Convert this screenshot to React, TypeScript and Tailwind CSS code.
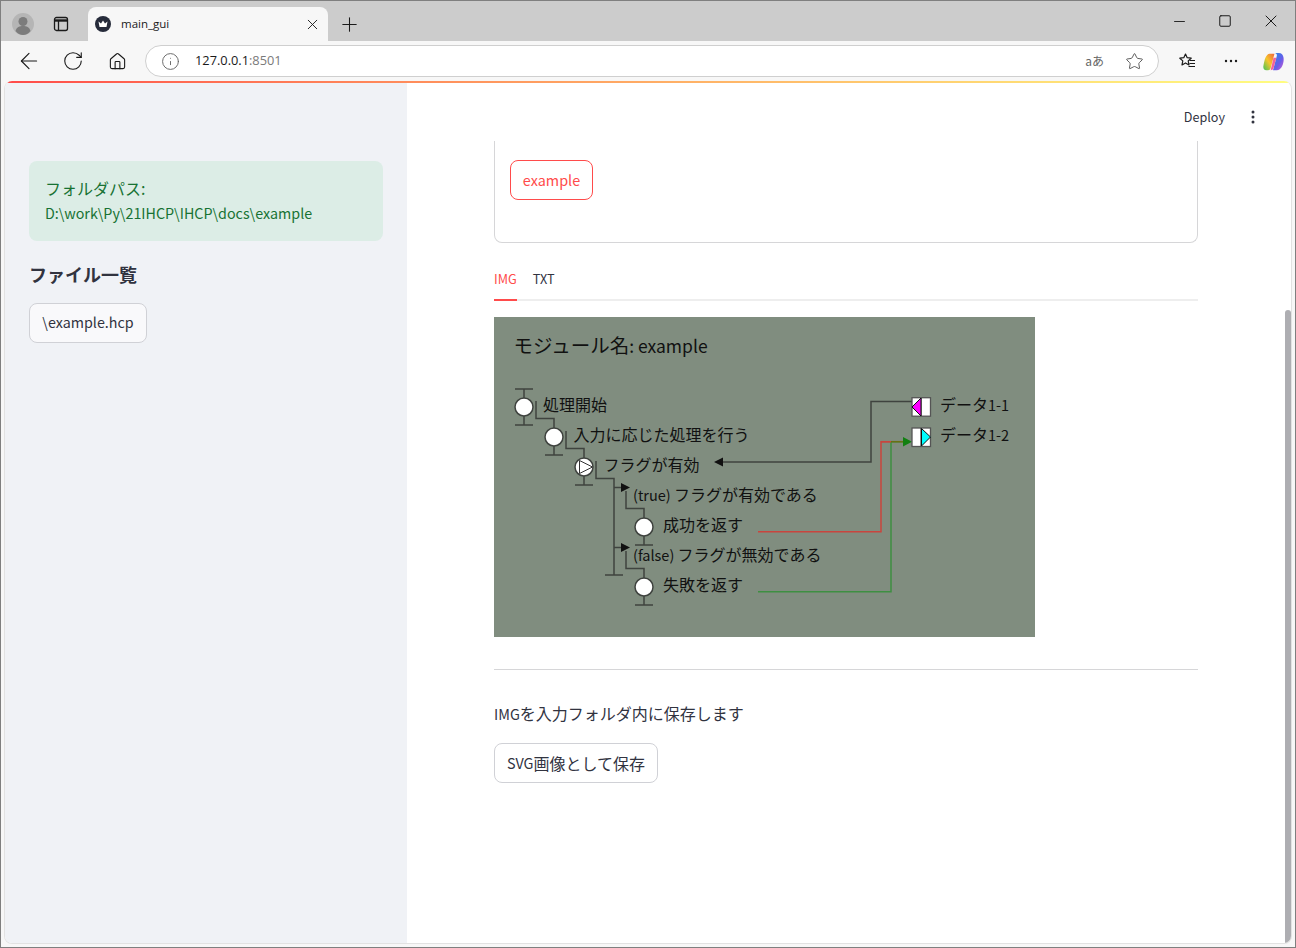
import { ArrowLeft, Home, Info, Minus, Plus, RotateCw, Square, Star, X } from "lucide-react";

const uiFont = { fontFamily: '"Noto Sans CJK JP", "Noto Sans", sans-serif' };

function ProfileIcon() {
    return (
        <svg width="22" height="22" viewBox="0 0 22 22">
            <circle cx="11" cy="11" r="11" fill="#b5b5b5" />
            <circle cx="11" cy="8.5" r="4.5" fill="#7c7c7c" />
            <path d="M3.5 18c1-4 4-5 7.5-5s6.500 1 7.500 5c-2 2.500-4.500 4-7.500 4s-5.500-1.500-7.500-4z" fill="#7c7c7c" />
        </svg>
    );
}

function TabsIcon() {
    return (
        <svg width="16" height="16" viewBox="0 0 16 16" fill="none" stroke="#1a1a1a" strokeWidth="1.3">
            <rect x="1.500" y="1.500" width="13" height="13" rx="2" />
            <path d="M2 4.500h12" strokeWidth="2.400" />
            <path d="M5.500 5v9" />
        </svg>
    );
}

function CrownFavicon() {
    return (
        <svg width="16" height="16" viewBox="0 0 16 16">
            <circle cx="8" cy="8" r="8" fill="#262b3a" />
            <path d="M3.500 5.500l2.500 2 2-3 2 3 2.500-2-1 5.500h-7z" fill="#ffffff" />
        </svg>
    );
}

function FavoritesIcon() {
    return (
        <svg width="18" height="18" viewBox="0 0 18 18" fill="none" stroke="#1a1a1a" strokeWidth="1.2">
            <path d="M7.500 2l1.700 3.700 4 .5-3 2.700.8 4-3.500-2-3.500 2 .8-4-3-2.700 4-.5z" strokeLinejoin="round" />
            <path d="M11.500 8.500h5.500M11.500 11.500h5.500M10.500 14.500h6.500" />
        </svg>
    );
}

function CopilotIcon() {
    return (
        <svg width="23" height="23" viewBox="0 0 24 24">
            <defs>
                <linearGradient id="copilotA" x1="0" y1="1" x2="1" y2="0">
                    <stop offset="0" stopColor="#3fc45a" />
                    <stop offset="0.5" stopColor="#f7c52c" />
                    <stop offset="1" stopColor="#f0663a" />
                </linearGradient>
                <linearGradient id="copilotB" x1="0" y1="0" x2="1" y2="1">
                    <stop offset="0" stopColor="#1f8fe8" />
                    <stop offset="0.6" stopColor="#6a5ce8" />
                    <stop offset="1" stopColor="#d45fd0" />
                </linearGradient>
            </defs>
            <path d="M8 4h5l-4 15c-.4 1.400-1.400 2-2.500 2H4.500C2 21 1 19 1.500 16.500 2.500 11 4 4 8 4z" fill="url(#copilotA)" />
            <path d="M13 3h4.500C20.500 3 22 5 22.500 8c.6 4-1 10-4 12-1 .7-2 1-3 1h-4l4-15c.3-1.500-.5-3-2.500-3z" fill="url(#copilotB)" />
            <path d="M9 21l3-13h3l-3 11c-.4 1.300-1.500 2-3 2z" fill="#f2639b" />
        </svg>
    );
}

function Node({ cx, cy, top = false }: { cx: number; cy: number; top?: boolean }) {
    return (
        <g>
            {top && <path d={`M${cx - 9} ${cy - 18}h18M${cx} ${cy - 18}v9`} />}
            <path d={`M${cx} ${cy + 9}v9M${cx - 9} ${cy + 18}h18`} />
            <circle cx={cx} cy={cy} r="9" fill="#ffffff" />
        </g>
    );
}

function FlowDiagram() {
    const lineColor = "#3f433f";
    return (
        <svg width="541" height="320" viewBox="494 317 541 320" className="block bg-[#808d7f]" style={uiFont}>
            <g fill="none" stroke={lineColor} strokeWidth="1.500">
                <path d="M536 401v17.500h18V428" />
                <path d="M566 431v17.500h18V458" />
                <path d="M596 461v17.500h18V575M605 575h18" />
                <path d="M614 487.500h8M614 547.500h8" />
                <path d="M626 491v17.500h18V518" />
                <path d="M626 551v17.500h18V578" />
                <Node cx={524} cy={407} top />
                <Node cx={554} cy={437} />
                <Node cx={584} cy={467} />
                <Node cx={644} cy={527} />
                <Node cx={644} cy={587} />
                <path d="M579.500 460.500l13 6.500-13 6.500z" strokeWidth="1" fill="none" stroke="#333" />
                <path d="M912 401.500h-41v60.500H722" />
            </g>
            <g fill="#111111">
                <path d="M621 483l9 4.500-9 4.500z" />
                <path d="M621 543l9 4.500-9 4.500z" />
                <path d="M714 462l9-4.500v9z" />
            </g>
            <path d="M758 531.700h123V441.700h10" fill="none" stroke="#c9453e" strokeWidth="1.500" />
            <path d="M758 591.700h133V441.700h13" fill="none" stroke="#3e8f42" strokeWidth="1.500" />
            <path d="M881 441.700h10" fill="none" stroke="#c9453e" strokeWidth="1.500" />
            <path d="M891 441.700h13" fill="none" stroke="#6a7012" strokeWidth="1.500" />
            <path d="M903 437l9 4.700-9 4.700z" fill="#118011" />
            <g stroke="#555555" strokeWidth="1.300">
                <rect x="912" y="397.700" width="18.500" height="18.500" fill="#ffffff" />
                <rect x="912" y="428" width="18.500" height="18.500" fill="#ffffff" />
            </g>
            <path d="M921 398v18M921 428v18" stroke="#222" strokeWidth="1" />
            <path d="M921 398l-9 9 9 9z" fill="#ff00ff" stroke="#111" strokeWidth="1" />
            <path d="M921.500 428.500l9 8.500-9 9z" fill="#00ffff" stroke="#111" strokeWidth="1" />
            <g fill="#111111" fontSize="16">
                <text x="513.500" y="352.500" fontSize="19.500">モジュール名<tspan fontSize="17.500">: example</tspan></text>
                <text x="543" y="411">処理開始</text>
                <text x="573.500" y="441">入力に応じた処理を行う</text>
                <text x="603.500" y="471">フラグが有効</text>
                <text x="633" y="501"><tspan fontSize="14.500">(true) </tspan>フラグが有効である</text>
                <text x="663" y="531">成功を返す</text>
                <text x="633" y="561"><tspan fontSize="14.500">(false) </tspan>フラグが無効である</text>
                <text x="663" y="591">失敗を返す</text>
                <text x="940" y="411">データ<tspan fontSize="14.500">1-1</tspan></text>
                <text x="940" y="441">データ<tspan fontSize="14.500">1-2</tspan></text>
            </g>
        </svg>
    );
}

export default function App() {
    return (
        <div className="w-[1296px] h-[948px] overflow-hidden flex flex-col bg-[#f7f7f7] border-x border-b border-[#7f7f7f]" style={uiFont}>
            {/* Title bar */}
            <div className="h-[41px] shrink-0 bg-[#cccccc] border-t border-[#7f7f7f] flex items-end text-[#1a1a1a]">
                <div className="w-[43px] h-[34px] pl-[11px] flex items-center">
                    <ProfileIcon />
                </div>
                <div className="w-[35px] h-[34px] pl-[9px] flex items-center">
                    <TabsIcon />
                </div>
                <div className="ml-[9px] w-[240px] h-[34px] bg-[#f7f7f7] rounded-t-lg flex items-center pl-[7px] pr-[7px]">
                    <CrownFavicon />
                    <span className="ml-[10px] flex-1 text-[11.500px] text-[#1a1a1a]" style={{ fontFamily: '"Open Sans", sans-serif' }}>main_gui</span>
                    <X size={17} strokeWidth={1.300} />
                </div>
                <div className="ml-[10px] h-[34px] flex items-center">
                    <Plus size={23} strokeWidth={1.100} />
                </div>
                <div className="ml-auto h-[40px] flex items-center">
                    <div className="w-[46px] flex justify-center"><Minus size={17} strokeWidth={1.300} /></div>
                    <div className="w-[46px] flex justify-center"><Square size={14} strokeWidth={1.700} /></div>
                    <div className="w-[46px] mr-[1px] flex justify-center"><X size={20} strokeWidth={1.200} /></div>
                </div>
            </div>

            {/* Toolbar */}
            <div className="h-[40px] shrink-0 flex items-center pl-[6px] text-[#1a1a1a]">
                <div className="w-[44px] flex justify-center"><ArrowLeft size={26} strokeWidth={1.050} /></div>
                <div className="w-[44px] flex justify-center"><RotateCw size={22} strokeWidth={1.200} /></div>
                <div className="w-[44px] flex justify-center"><Home size={19} strokeWidth={1.400} /></div>
                <div className="ml-[6px] w-[1014px] h-[32px] bg-white border border-[#cfcfcf] rounded-full flex items-center pl-[15px] pr-[14px]">
                    <Info size={19} strokeWidth={1.200} className="text-[#666666]" />
                    <span className="ml-[15px] flex-1 text-[12.800px] text-[#1a1a1a]" style={{ fontFamily: '"Open Sans", sans-serif' }}>
                        127.0.0.1<span className="text-[#7a7a7a]">:8501</span>
                    </span>
                    <span className="mr-[21px] text-[12px] text-[#666666]">aあ</span>
                    <Star size={19} strokeWidth={1.200} className="text-[#555555]" />
                </div>
                <div className="w-[44px] ml-[6px] flex justify-center"><FavoritesIcon /></div>
                <div className="w-[44px] flex justify-center">
                    <svg width="14" height="4" viewBox="0 0 14 4" fill="#1a1a1a">
                        <circle cx="2" cy="2" r="1.200" />
                        <circle cx="7" cy="2" r="1.200" />
                        <circle cx="12" cy="2" r="1.200" />
                    </svg>
                </div>
                <div className="w-[40px] flex justify-center"><CopilotIcon /></div>
            </div>

            {/* Page */}
            <div className="flex-1 mx-[3px] mb-[3px] flex flex-col overflow-hidden rounded-lg bg-white relative border-x border-b border-[#e2e2e2]">
                <div className="h-[2px] shrink-0 bg-gradient-to-r from-[#ff4b4b] to-[#fffd80]" />
                <div className="flex-1 flex min-h-0 text-[#31333f]">
                    <aside className="w-[402px] shrink-0 bg-[#f0f2f6] pt-[78px] pl-[24px]">
                        <div className="w-[354px] h-[80px] bg-[#dcede6] rounded-lg px-[16px] pt-[15px] text-[#177233]">
                            <div className="text-[16px] leading-[24px]">フォルダパス:</div>
                            <div className="text-[14.300px] leading-[24px] mt-[1px]">D:\work\Py\21IHCP\IHCP\docs\example</div>
                        </div>
                        <h3 className="mt-[21px] text-[18px] leading-[25px] font-bold">ファイル一覧</h3>
                        <div className="mt-[16px] w-[118px] h-[40px] flex items-center justify-center bg-[#f9f9fb] border border-[#d0d1d6] rounded-lg text-[14.300px] pb-[3px]">\example.hcp</div>
                    </aside>

                    <main className="flex-1 min-w-0 flex flex-col items-start pl-[87px]">
                        <div className="w-[797px] h-[58px] shrink-0 flex items-center justify-end pt-[10px] pr-[36px] text-[12.600px]">
                            <span>Deploy</span>
                            <svg className="ml-[26px]" width="4" height="14" viewBox="0 0 4 14" fill="#31333f">
                                <circle cx="2" cy="2" r="1.500" />
                                <circle cx="2" cy="7" r="1.500" />
                                <circle cx="2" cy="12" r="1.500" />
                            </svg>
                        </div>

                        <div className="w-[704px]">
                            <div className="h-[102px] border-x border-b border-[#d6d6d8] rounded-b-lg pt-[19px] pl-[15px]">
                                <div className="w-[83px] h-[40px] flex items-center justify-center bg-white border border-[#ff4b4b] rounded-lg text-[14.400px] text-[#ff4b4b]">example</div>
                            </div>

                            <div className="mt-[25px] h-[33px] flex gap-[16px] border-b-2 border-[#eeeeee] text-[12.700px]">
                                <div className="h-[33px] border-b-2 border-[#ff4b4b] text-[#ff4b4b] leading-[22px]">IMG</div>
                                <div className="leading-[22px]">TXT</div>
                            </div>

                            <div className="mt-[16px]">
                                <FlowDiagram />
                            </div>

                            <hr className="mt-[32px] border-t border-[#d6d6d8]" />

                            <p className="mt-[31px] text-[16px] leading-[24px]"><span className="text-[14.400px]">IMG</span>を入力フォルダ内に保存します</p>

                            <div className="mt-[17px] w-[164px] h-[40px] flex items-center justify-center bg-white border border-[#d0d1d6] rounded-lg text-[16px] pb-[1px]"><span className="text-[14.400px]">SVG</span>画像として保存</div>
                        </div>
                    </main>
                </div>
                {/* Scrollbar thumb over the page */}
                <div className="absolute right-0 top-[229px] bottom-0 w-[6px] rounded-t-full bg-[#aeaeb2]" />
            </div>
        </div>
    );
}
